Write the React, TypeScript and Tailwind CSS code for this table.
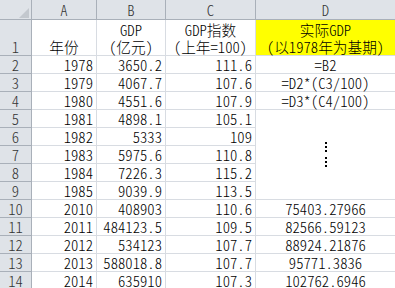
type Row = { n: number; a: string; b: string; c: string; d?: string };

const rows: Row[] = [
  { n: 2, a: '1978', b: '3650.2', c: '111.6', d: '=B2' },
  { n: 3, a: '1979', b: '4067.7', c: '107.6', d: '=D2*(C3/100)' },
  { n: 4, a: '1980', b: '4551.6', c: '107.9', d: '=D3*(C4/100)' },
  { n: 5, a: '1981', b: '4898.1', c: '105.1' },
  { n: 6, a: '1982', b: '5333', c: '109' },
  { n: 7, a: '1983', b: '5975.6', c: '110.8' },
  { n: 8, a: '1984', b: '7226.3', c: '115.2' },
  { n: 9, a: '1985', b: '9039.9', c: '113.5' },
  { n: 10, a: '2010', b: '408903', c: '110.6', d: '75403.27966' },
  { n: 11, a: '2011', b: '484123.5', c: '109.5', d: '82566.59123' },
  { n: 12, a: '2012', b: '534123', c: '107.7', d: '88924.21876' },
  { n: 13, a: '2013', b: '588018.8', c: '107.7', d: '95771.3836' },
  { n: 14, a: '2014', b: '635910', c: '107.3', d: '102762.6946' },
];

const head = 'bg-[#dfe3e8] border-r border-b border-[#a9b0b9] text-[#333]';
const grid = 'border-r border-b border-[#d8dce2] px-[3px]';

// half-width cells so formulas keep the sheet's fixed pitch
const Mono = ({ text }: { text: string }) => (
  <span className="flex">
    {text.split('').map((ch, i) => (
      <span key={i} className="inline-block w-[7.33px] text-center">
        {ch}
      </span>
    ))}
  </span>
);

const Dots = () => (
  <div className="flex flex-col gap-[2px]">
    {[0, 1, 2].map((i) => (
      <div key={i} className="w-[2px] h-[2px] bg-black" />
    ))}
    <div className="h-[1px]" />
    {[3, 4, 5].map((i) => (
      <div key={i} className="w-[2px] h-[2px] bg-black" />
    ))}
  </div>
);

export default function App() {
  return (
    <div className="w-[395px] h-[288px] overflow-hidden bg-white">
      <div className="grid grid-cols-[32px_65px_69px_90px_140px] grid-rows-[20px_36px_repeat(13,18px)] font-['Noto_Sans_CJK_SC',sans-serif] font-light text-[14.67px] leading-[17px] text-black [font-feature-settings:'hwid']">
        {/* column headers */}
        <div className={`${head} relative`}>
          <svg className="absolute left-[19px] top-[8px]" width="10" height="10" viewBox="0 0 10 10">
            <polygon points="10,0 10,10 0,10" fill="#c3c8ce" />
          </svg>
        </div>
        {['A', 'B', 'C', 'D'].map((l) => (
          <div key={l} className={`${head} flex items-center justify-center`}>
            {l}
          </div>
        ))}

        {/* row 1 */}
        <div className={`${head} flex items-end justify-center`}>1</div>
        <div className={`${grid} flex items-end justify-center`}>年份</div>
        <div className={`${grid} flex flex-col items-center justify-end whitespace-nowrap`}>
          <span>GDP</span>
          <span>（亿元）</span>
        </div>
        <div className={`${grid} flex flex-col items-center justify-end whitespace-nowrap`}>
          <span>GDP指数</span>
          <span>（上年=100）</span>
        </div>
        <div className={`${grid} flex flex-col items-center justify-end whitespace-nowrap bg-[#ffff00]`}>
          <span>实际GDP</span>
          <span>（以1978年为基期）</span>
        </div>

        {rows.map((r) => (
          <Line key={r.n} r={r} />
        ))}
      </div>
    </div>
  );
}

function Line({ r }: { r: Row }) {
  return (
    <>
      <div className={`${head} flex items-end justify-center`}>{r.n}</div>
      <div className={`${grid} flex items-end justify-end`}>{r.a}</div>
      <div className={`${grid} flex items-end justify-end`}>{r.b}</div>
      <div className={`${grid} flex items-end justify-end`}>{r.c}</div>
      {r.n === 5 && (
        <div className={`${grid} row-span-5 flex items-center justify-center`}>
          <Dots />
        </div>
      )}
      {(r.n < 5 || r.n > 9) && (
        <div className={`${grid} flex items-end justify-center whitespace-nowrap`}>
          {r.d && r.d.startsWith('=') ? <Mono text={r.d} /> : r.d}
        </div>
      )}
    </>
  );
}
